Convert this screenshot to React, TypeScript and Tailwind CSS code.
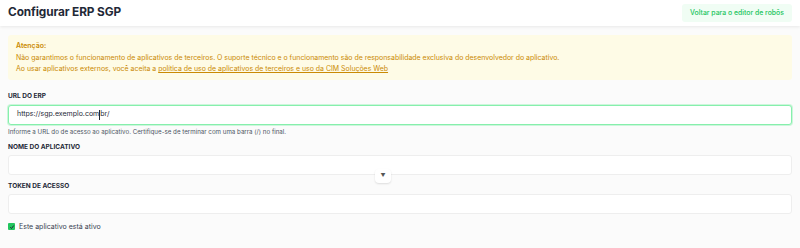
import React from "react";

export default function App() {
  return (
    <div className="w-[800px] h-[248px] overflow-hidden bg-[#fbfbfb] text-[#1f2937]" style={{ fontFamily: "Inter, 'Noto Sans', sans-serif" }}>
      <header className="h-[26px] bg-white flex items-center justify-between pl-2 pr-2 shadow-[0_1px_3px_rgba(0,0,0,0.08)] relative z-10">
        <h1 className="text-[11.8px] font-bold text-[#1f2937] tracking-[-0.1px]">Configurar ERP SGP</h1>
        <button className="h-[18px] w-[110px] rounded-[3px] bg-[#f0fdf4] text-[#22c55e] text-[6.9px] font-medium flex items-center justify-center">
          Voltar para o editor de robôs
        </button>
      </header>
      <main className="px-2 pt-[9px]">
        <div className="rounded-[3px] bg-[#fefbe6] text-[#ca8a04] text-[6.95px] leading-[11.5px] px-2 pt-[5px] pb-[5px]">
          <div className="font-semibold">Atenção:</div>
          <div>Não garantimos o funcionamento de aplicativos de terceiros. O suporte técnico e o funcionamento são de responsabilidade exclusiva do desenvolvedor do aplicativo.</div>
          <div>
            Ao usar aplicativos externos, você aceita a{" "}
            <span className="underline">política de uso de aplicativos de terceiros e uso da CIM Soluções Web</span>
          </div>
        </div>

        <div className="mt-[11px]">
          <label className="block text-[6.5px] font-bold text-[#1f2937] uppercase leading-[10px]">URL DO ERP</label>
          <div className="mt-[4px] h-[20px] rounded-[3px] border border-[#86efac] bg-white flex items-center pl-[8px] text-[7px] text-[#1f2937] shadow-[0_0_0_1px_rgba(134,239,172,0.4)]">
            <span>https://sgp.exemplo.com</span>
            <span className="w-px h-[10px] bg-[#1f2937]"></span>
            <span>br/</span>
          </div>
          <p className="mt-[2px] text-[6.2px] text-[#4b5563] leading-[10px]">Informe a URL do de acesso ao aplicativo. Certifique-se de terminar com uma barra (/) no final.</p>
        </div>

        <div className="mt-[5px]">
          <label className="block text-[6.5px] font-bold text-[#1f2937] uppercase leading-[10px]">NOME DO APLICATIVO</label>
          <div className="mt-[3px] h-[20px] rounded-[3px] border border-[#eeeeee] bg-white relative">
            <div className="absolute left-[366px] top-[13px] w-[16px] h-[14px] bg-white rounded-[4px] shadow-[0_1px_2px_rgba(0,0,0,0.12)] flex items-center justify-center text-[5px] text-[#555] z-10">▼</div>
          </div>
        </div>

        <div className="mt-[6px]">
          <label className="block text-[6.5px] font-bold text-[#1f2937] uppercase leading-[10px]">TOKEN DE ACESSO</label>
          <div className="mt-[3px] h-[20px] rounded-[3px] border border-[#eeeeee] bg-white"></div>
        </div>

        <div className="mt-[8px] flex items-center gap-[4px]">
          <span className="w-[7px] h-[7px] rounded-[1px] bg-[#22c55e] flex items-center justify-center">
            <svg width="6" height="6" viewBox="0 0 12 12"><path d="M2.5 6.5 L5 9 L9.5 3" stroke="#1f2937" strokeWidth="2" fill="none" /></svg>
          </span>
          <span className="text-[7px] text-[#374151]">Este aplicativo está ativo</span>
        </div>
      </main>
    </div>
  );
}
